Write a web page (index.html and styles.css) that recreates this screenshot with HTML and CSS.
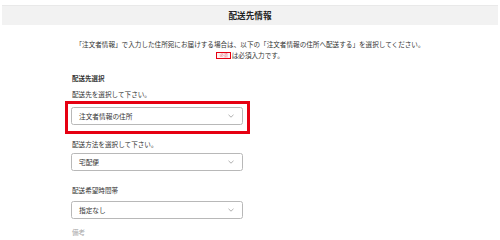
FILE: index.html
```html
<!DOCTYPE html>
<html lang="ja">
<head>
<meta charset="utf-8">
<title>配送先情報</title>
<link rel="stylesheet" href="styles.css">
</head>
<body>
<div class="page">
  <h1 class="title-bar">配送先情報</h1>
  <div class="intro">
    <p class="intro-line">「注文者情報」で入力した住所宛にお届けする場合は、以下の「注文者情報の住所へ配送する」を選択してください。</p>
    <p class="intro-line"><span class="badge">必須</span>は必須入力です。</p>
  </div>
  <div class="form">
    <div class="heading">配送先選択</div>
    <div class="desc desc-first">配送先を選択して下さい。</div>
    <div class="highlight">
      <div class="select">
        <span class="select-text">注文者情報の住所</span>
        <svg class="chev" width="6" height="4" viewBox="0 0 6 4"><path d="M0.5 0.8 L3 3.2 L5.5 0.8" fill="none" stroke="#9a9a9a" stroke-width="0.8"/></svg>
      </div>
    </div>
    <div class="desc desc-method">配送方法を選択して下さい。</div>
    <div class="select select-method">
      <span class="select-text">宅配便</span>
      <svg class="chev" width="6" height="4" viewBox="0 0 6 4"><path d="M0.5 0.8 L3 3.2 L5.5 0.8" fill="none" stroke="#9a9a9a" stroke-width="0.8"/></svg>
    </div>
    <div class="desc desc-time">配送希望時間帯</div>
    <div class="select select-time">
      <span class="select-text">指定なし</span>
      <svg class="chev" width="6" height="4" viewBox="0 0 6 4"><path d="M0.5 0.8 L3 3.2 L5.5 0.8" fill="none" stroke="#9a9a9a" stroke-width="0.8"/></svg>
    </div>
    <div class="desc desc-faint">備考</div>
  </div>
</div>
</body>
</html>
```
FILE: styles.css
```css
html, body {
  margin: 0;
  padding: 0;
  background: #ffffff;
}
body {
  font-family: "Noto Sans CJK JP", "Noto Sans", sans-serif;
  color: #333333;
  overflow: hidden;
}
.page {
  width: 500px;
  height: 237px;
  overflow: hidden;
}
.title-bar {
  margin: 5px 2px 0;
  height: 20px;
  box-sizing: border-box;
  border-top: 1px solid #e9e9e9;
  background: #f2f2f2;
  font-size: 8.6px;
  font-weight: 700;
  line-height: 19px;
  text-align: center;
  color: #222222;
}
.intro {
  margin-top: 13.5px;
  text-align: center;
}
.intro-line {
  margin: 0;
  font-size: 6.6px;
  line-height: 11px;
  height: 11px;
  white-space: nowrap;
}
.badge {
  display: inline-block;
  box-sizing: border-box;
  height: 7px;
  width: 15px;
  padding: 0;
  border: 1px solid #e60012;
  background: #fdf3f3;
  color: #e8707a;
  font-size: 4px;
  font-weight: 400;
  line-height: 5px;
  text-align: center;
  vertical-align: middle;
  margin-right: 0.5px;
}
.form {
  padding-left: 71px;
}
.heading {
  margin-top: 12.5px;
  font-size: 6.5px;
  font-weight: 700;
  line-height: 10px;
  height: 10px;
  padding-left: 1px;
}
.desc {
  font-size: 6.6px;
  line-height: 10px;
  height: 10px;
  padding-left: 1px;
  white-space: nowrap;
}
.desc-first { margin-top: 6px; }
.desc-method { margin-top: 5px; }
.desc-time { margin-top: 14px; }
.desc-faint {
  margin-top: 10px;
  color: #a8a8a8;
  line-height: 7px;
  height: 7px;
}
.highlight {
  margin-top: 2px;
  margin-left: -6px;
  width: 185px;
  height: 33px;
  box-sizing: border-box;
  border: 3px solid #e60012;
  padding: 3px 4px 0 3px;
}
.select {
  width: 172px;
  height: 18px;
  box-sizing: border-box;
  border: 1px solid #b8b8b8;
  border-radius: 2.5px;
  background: #ffffff;
  display: flex;
  align-items: center;
  justify-content: space-between;
  padding: 0 8px 0 7px;
}
.select-method { margin-top: 4px; }
.select-time { margin-top: 6px; }
.select-text {
  font-size: 6.7px;
  line-height: 1;
  color: #333333;
}
.chev {
  display: block;
}
```
